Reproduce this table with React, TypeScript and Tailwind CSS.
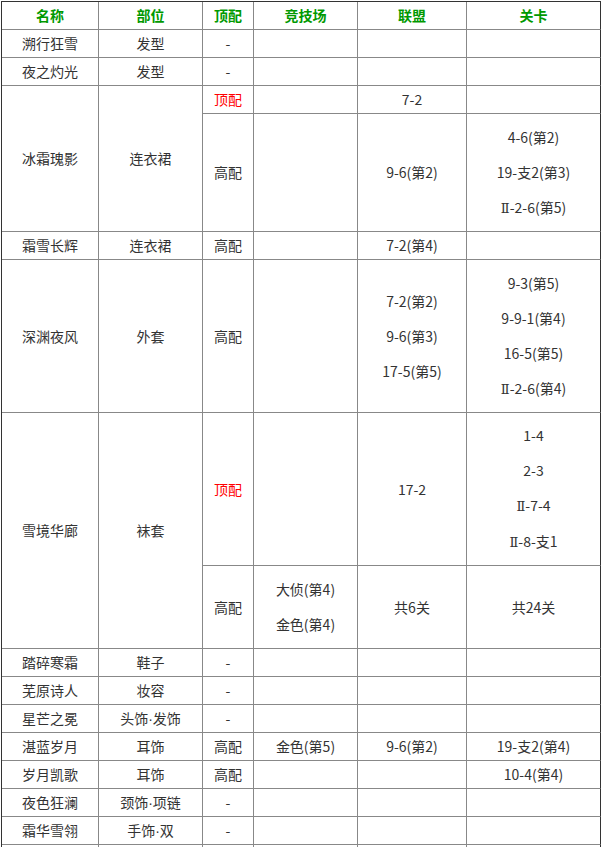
import React from "react";

const RED = "text-[#ff0000]";

type Cell = {
  content?: React.ReactNode;
  rowSpan?: number;
  red?: boolean;
};

function fmt(t: string): React.ReactNode {
  const parts = t.split(/(Ⅱ|·)/);
  return parts.map((p, i) =>
    p === "Ⅱ" ? (
      <span key={i} className="font-['DejaVu_Serif',serif] text-[13px]">
        Ⅱ
      </span>
    ) : p === "·" ? (
      <span key={i} className="font-['Liberation_Sans',sans-serif]">
        ·
      </span>
    ) : (
      <React.Fragment key={i}>{p}</React.Fragment>
    )
  );
}

function Lines({ items }: { items: string[] }) {
  return (
    <div className="flex flex-col items-center gap-[14px] leading-[21px]">
      {items.map((t, i) => (
        <div key={i}>{fmt(t)}</div>
      ))}
    </div>
  );
}

const td = "border-r border-b border-[#888] last:border-r-[#333] text-center align-middle p-0";

function Row({ cells, h = "h-[28px]" }: { cells: Cell[]; h?: string }) {
  return (
    <tr className={h}>
      {cells.map((c, i) => (
        <td key={i} rowSpan={c.rowSpan} className={`${td} ${c.red ? RED : ""}`}>
          {typeof c.content === "string" ? fmt(c.content) : c.content}
        </td>
      ))}
    </tr>
  );
}

function simple(name: string, part: string, top: string, arena = "", league = "", level = "") {
  return [
    { content: name },
    { content: part },
    { content: top },
    { content: arena },
    { content: league },
    { content: level },
  ];
}

export default function App() {
  const headers = ["名称", "部位", "顶配", "竞技场", "联盟", "关卡"];
  return (
    <div className="bg-white w-[603px] h-[847px] overflow-hidden font-['Noto_Sans_CJK_SC','Noto_Sans',sans-serif] text-[14px] text-[#333]">
      <table className="ml-px mt-px w-[600px] table-fixed border-separate border-spacing-0 border-l border-t border-[#333]">
        <colgroup>
          <col className="w-[97px]" />
          <col className="w-[104px]" />
          <col className="w-[51px]" />
          <col className="w-[104px]" />
          <col className="w-[109px]" />
          <col className="w-[134px]" />
        </colgroup>
        <tbody>
          <tr className="h-[28px]">
            {headers.map((h) => (
              <td key={h} className={`${td} font-bold text-[#009900]`}>
                {h}
              </td>
            ))}
          </tr>
          <Row cells={simple("溯行狂雪", "发型", "-")} />
          <Row cells={simple("夜之灼光", "发型", "-")} />
          <Row
            cells={[
              { content: "冰霜瑰影", rowSpan: 2 },
              { content: "连衣裙", rowSpan: 2 },
              { content: "顶配", red: true },
              { content: "" },
              { content: "7-2" },
              { content: "" },
            ]}
          />
          <Row
            h="h-[118px]"
            cells={[
              { content: "高配" },
              { content: "" },
              { content: "9-6(第2)" },
              { content: <Lines items={["4-6(第2)", "19-支2(第3)", "Ⅱ-2-6(第5)"]} /> },
            ]}
          />
          <Row cells={simple("霜雪长辉", "连衣裙", "高配", "", "7-2(第4)", "")} />
          <Row
            h="h-[153px]"
            cells={[
              { content: "深渊夜风" },
              { content: "外套" },
              { content: "高配" },
              { content: "" },
              { content: <Lines items={["7-2(第2)", "9-6(第3)", "17-5(第5)"]} /> },
              { content: <Lines items={["9-3(第5)", "9-9-1(第4)", "16-5(第5)", "Ⅱ-2-6(第4)"]} /> },
            ]}
          />
          <Row
            h="h-[153px]"
            cells={[
              { content: "雪境华廊", rowSpan: 2 },
              { content: "袜套", rowSpan: 2 },
              { content: "顶配", red: true },
              { content: "" },
              { content: "17-2" },
              { content: <Lines items={["1-4", "2-3", "Ⅱ-7-4", "Ⅱ-8-支1"]} /> },
            ]}
          />
          <Row
            h="h-[83px]"
            cells={[
              { content: "高配" },
              { content: <Lines items={["大侦(第4)", "金色(第4)"]} /> },
              { content: "共6关" },
              { content: "共24关" },
            ]}
          />
          <Row cells={simple("踏碎寒霜", "鞋子", "-")} />
          <Row cells={simple("芜原诗人", "妆容", "-")} />
          <Row cells={simple("星芒之冕", "头饰·发饰", "-")} />
          <Row cells={simple("湛蓝岁月", "耳饰", "高配", "金色(第5)", "9-6(第2)", "19-支2(第4)")} />
          <Row cells={simple("岁月凯歌", "耳饰", "高配", "", "", "10-4(第4)")} />
          <Row cells={simple("夜色狂澜", "颈饰·项链", "-")} />
          <Row cells={simple("霜华雪翎", "手饰·双", "-")} />
          <Row cells={simple("", "", "")} />
        </tbody>
      </table>
    </div>
  );
}
